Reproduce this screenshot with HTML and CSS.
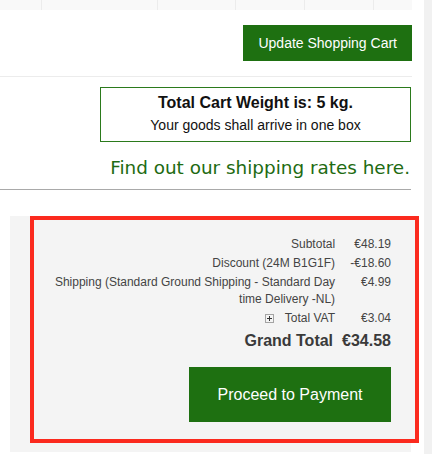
FILE: index.html
```html
<!DOCTYPE html>
<html lang="en">
<head>
<meta charset="utf-8">
<title>Cart</title>
<link rel="stylesheet" href="styles.css">
</head>
<body>
<div class="page">
  <main class="main">
    <div class="table-tail">
      <span></span><span></span><span></span><span></span><span></span><span></span>
    </div>
    <div class="actions">
      <button class="btn btn-update" type="button">Update Shopping Cart</button>
    </div>
    <div class="weight">
      <p class="weight-title">Total Cart Weight is: 5 kg.</p>
      <p class="weight-sub">Your goods shall arrive in one box</p>
    </div>
    <p class="rates"><a class="rates-link" href="#">Find out our shipping rates here.</a></p>
    <hr class="rule">
    <section class="summary">
      <div class="totals-box">
        <div class="totals">
          <div class="label">Subtotal</div><div class="value">€48.19</div>
          <div class="label">Discount (24M B1G1F)</div><div class="value">-€18.60</div>
          <div class="label">Shipping (Standard Ground Shipping - Standard Day time Delivery -NL)</div><div class="value">€4.99</div>
          <div class="label"><svg class="vat-icon" width="9" height="9" viewBox="0 0 9 9"><rect x="0.5" y="0.5" width="8" height="8" fill="none" stroke="#555" stroke-width="1" stroke-dasharray="1 1"/><path d="M4.5 2v5M2 4.5h5" stroke="#333" stroke-width="1"/></svg>Total VAT</div><div class="value">€3.04</div>
          <div class="label grand">Grand Total</div><div class="value grand">€34.58</div>
        </div>
        <div class="checkout">
          <button class="btn btn-pay" type="button">Proceed to Payment</button>
        </div>
      </div>
    </section>
  </main>
  <div class="scrollbar"></div>
</div>
</body>
</html>
```

FILE: styles.css
```css
* { box-sizing: border-box; }

html, body {
  margin: 0;
  padding: 0;
  background: #fff;
}

body {
  font-family: "Liberation Sans", Arial, sans-serif;
  color: #444;
}

.page {
  display: flex;
  justify-content: space-between;
  width: 432px;
  height: 454px;
  overflow: hidden;
}

.main {
  width: 412px;
}

.scrollbar {
  width: 8px;
  background: #f1f1f1;
}

.table-tail {
  display: grid;
  grid-template-columns: 42px 116px 78px 69px 69px 1fr;
  height: 10px;
  background: #f9f9f9;
}

.table-tail span {
  border-right: 1px solid #ececec;
}

.table-tail span:last-child {
  border-right: 0;
}

.actions {
  display: flex;
  justify-content: flex-end;
  padding: 15px 0;
  border-bottom: 1px solid #ececec;
}

.btn {
  border: 0;
  background: #1e7011;
  color: #fff;
  font-family: "Liberation Sans", Arial, sans-serif;
  cursor: pointer;
}

.btn-update {
  height: 36px;
  padding: 0 15px;
  font-size: 14px;
}

.weight {
  margin: 10px 1px 0 100px;
  padding: 5px 10px 7px;
  border: 1px solid #2b7a1c;
  text-align: center;
  color: #111;
}

.weight-title {
  margin: 0;
  font-size: 16px;
  line-height: 20px;
  font-weight: bold;
}

.weight-sub {
  margin: 3px 0 0;
  font-size: 14px;
  line-height: 18px;
}

.rates {
  margin: 14px 2px 0 0;
  text-align: right;
  font-family: "DejaVu Sans", Verdana, sans-serif;
  font-size: 18.4px;
  line-height: 24px;
}

.rates-link {
  color: #1e6b12;
  text-decoration: none;
}

.rule {
  margin: 9px 1px 0 0;
  height: 0;
  border: 0;
  border-top: 1px solid #a9a9a9;
}

.summary {
  margin: 26px 1px 0 10px;
  padding-bottom: 9px;
  background: #f4f4f4;
}

.totals-box {
  margin: 0 -8px 0 20px;
  padding: 15px 24px 17px 0;
  border: 4px solid #fb2a1e;
  background: #f4f4f4;
}

.totals {
  display: grid;
  grid-template-columns: 282px auto;
  justify-content: end;
  font-size: 12px;
  line-height: 17px;
  color: #444;
}

.label,
.value {
  padding: 1px 0;
  text-align: right;
}

.value {
  padding-left: 7px;
}

.label.grand {
  padding-right: 2px;
}

.vat-icon {
  margin-right: 11px;
  vertical-align: -1px;
}

.grand {
  font-size: 16px;
  line-height: 21px;
  font-weight: bold;
  color: #3a3a3a;
  padding-top: 2px;
  padding-bottom: 2px;
}

.checkout {
  display: flex;
  justify-content: flex-end;
  margin-top: 14px;
}

.btn-pay {
  width: 202px;
  height: 55px;
  font-size: 16px;
}
```
